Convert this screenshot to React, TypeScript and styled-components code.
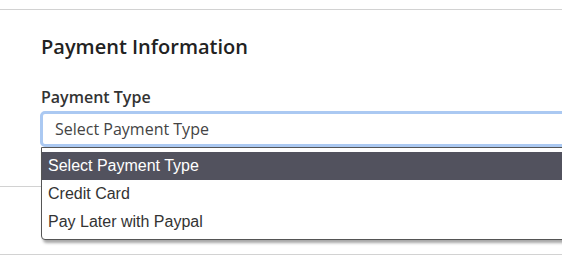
import React from "react";
import styled, { createGlobalStyle } from "styled-components";

const GlobalStyle = createGlobalStyle`
  html, body {
    margin: 0;
    background: #fff;
    overflow: hidden;
    font-family: "Open Sans", "Liberation Sans", sans-serif;
  }
`;

const Page = styled.div`
  padding-top: 9px;
  width: 562px;
  overflow: hidden;
`;

const Section = styled.section`
  border-top: 1px solid #d2d2d2;
  padding: 23px 0 39px 40px;
`;

const Spacer = styled.div`
  height: 69px;
  border-top: 1px solid #d2d2d2;
  border-bottom: 1px solid #d2d2d2;
  box-sizing: border-box;
`;

const Heading = styled.h2`
  margin: 0 0 25px 1px;
  font-size: 20px;
  line-height: 28px;
  font-weight: 600;
  color: #222;
`;

const Label = styled.label`
  display: block;
  margin: 0 0 3px 1px;
  font-size: 16px;
  line-height: 22px;
  font-weight: 600;
  color: #333;
`;

const Field = styled.div`
  position: relative;
  width: 560px;
`;

const SelectBox = styled.div`
  box-sizing: border-box;
  height: 36px;
  border: 3px solid #abc9f2;
  border-radius: 5px;
  padding: 0 12px;
  display: flex;
  align-items: center;
  font-size: 16px;
  color: #444;
  background: #fff;
`;

const Menu = styled.ul`
  position: absolute;
  top: 100%;
  left: 1px;
  right: 0;
  margin: 0;
  padding: 4px 0 3px;
  list-style: none;
  background: #fff;
  border: 1px solid #555;
  border-radius: 0 0 4px 4px;
  box-shadow: 2px 3px 3px rgba(0, 0, 0, 0.35);
  font-family: "Liberation Sans", Arial, sans-serif;
  font-size: 16px;
`;

const Option = styled.li<{ $active?: boolean }>`
  height: 28px;
  line-height: 28px;
  padding-left: 6px;
  color: ${(p) => (p.$active ? "#fff" : "#333")};
  background: ${(p) => (p.$active ? "#52525e" : "transparent")};
`;

const options = ["Select Payment Type", "Credit Card", "Pay Later with Paypal"];

const App: React.FC = () => {
  return (
    <>
      <GlobalStyle />
      <Page>
        <Section>
          <Heading>Payment Information</Heading>
          <Label>Payment Type</Label>
          <Field>
            <SelectBox>Select Payment Type</SelectBox>
            <Menu>
              {options.map((o, i) => (
                <Option key={o} $active={i === 0}>
                  {o}
                </Option>
              ))}
            </Menu>
          </Field>
        </Section>
        <Spacer />
      </Page>
    </>
  );
};

export default App;
